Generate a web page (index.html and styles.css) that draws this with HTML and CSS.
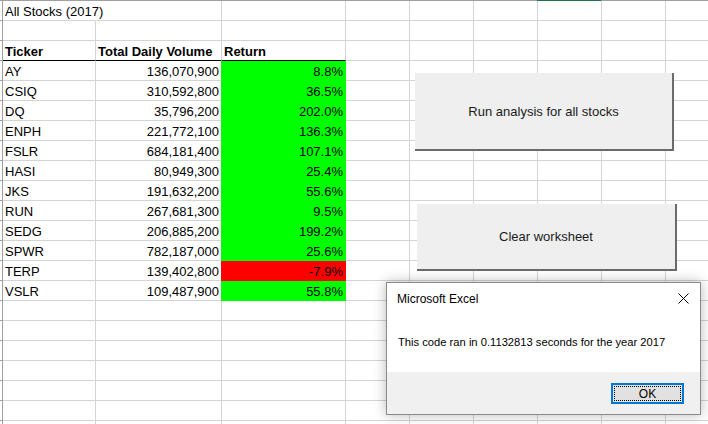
FILE: index.html
```html
<!DOCTYPE html>
<html>
<head>
<meta charset="utf-8">
<title>All Stocks (2017)</title>
<link rel="stylesheet" href="styles.css">
</head>
<body>
<div class="topbar"><span class="sel"></span></div>
<div class="sheet">
  <div class="row"><div class="rh"></div><div class="c spill">All Stocks (2017)</div><div class="c"></div><div class="c"></div><div class="c"></div><div class="c"></div><div class="c"></div><div class="c"></div><div class="c"></div><div class="c"></div></div>
  <div class="row"><div class="rh"></div><div class="c"></div><div class="c"></div><div class="c"></div><div class="c"></div><div class="c"></div><div class="c"></div><div class="c"></div><div class="c"></div><div class="c"></div></div>
  <div class="row head"><div class="rh"></div><div class="c">Ticker</div><div class="c">Total Daily Volume</div><div class="c">Return</div><div class="c"></div><div class="c"></div><div class="c"></div><div class="c"></div><div class="c"></div><div class="c"></div></div>
  <div class="row"><div class="rh"></div><div class="c">AY</div><div class="c num">136,070,900</div><div class="c num pos">8.8%</div><div class="c"></div><div class="c"></div><div class="c"></div><div class="c"></div><div class="c"></div><div class="c"></div></div>
  <div class="row"><div class="rh"></div><div class="c">CSIQ</div><div class="c num">310,592,800</div><div class="c num pos">36.5%</div><div class="c"></div><div class="c"></div><div class="c"></div><div class="c"></div><div class="c"></div><div class="c"></div></div>
  <div class="row"><div class="rh"></div><div class="c">DQ</div><div class="c num">35,796,200</div><div class="c num pos">202.0%</div><div class="c"></div><div class="c"></div><div class="c"></div><div class="c"></div><div class="c"></div><div class="c"></div></div>
  <div class="row"><div class="rh"></div><div class="c">ENPH</div><div class="c num">221,772,100</div><div class="c num pos">136.3%</div><div class="c"></div><div class="c"></div><div class="c"></div><div class="c"></div><div class="c"></div><div class="c"></div></div>
  <div class="row"><div class="rh"></div><div class="c">FSLR</div><div class="c num">684,181,400</div><div class="c num pos">107.1%</div><div class="c"></div><div class="c"></div><div class="c"></div><div class="c"></div><div class="c"></div><div class="c"></div></div>
  <div class="row"><div class="rh"></div><div class="c">HASI</div><div class="c num">80,949,300</div><div class="c num pos">25.4%</div><div class="c"></div><div class="c"></div><div class="c"></div><div class="c"></div><div class="c"></div><div class="c"></div></div>
  <div class="row"><div class="rh"></div><div class="c">JKS</div><div class="c num">191,632,200</div><div class="c num pos">55.6%</div><div class="c"></div><div class="c"></div><div class="c"></div><div class="c"></div><div class="c"></div><div class="c"></div></div>
  <div class="row"><div class="rh"></div><div class="c">RUN</div><div class="c num">267,681,300</div><div class="c num pos">9.5%</div><div class="c"></div><div class="c"></div><div class="c"></div><div class="c"></div><div class="c"></div><div class="c"></div></div>
  <div class="row"><div class="rh"></div><div class="c">SEDG</div><div class="c num">206,885,200</div><div class="c num pos">199.2%</div><div class="c"></div><div class="c"></div><div class="c"></div><div class="c"></div><div class="c"></div><div class="c"></div></div>
  <div class="row"><div class="rh"></div><div class="c">SPWR</div><div class="c num">782,187,000</div><div class="c num pos">25.6%</div><div class="c"></div><div class="c"></div><div class="c"></div><div class="c"></div><div class="c"></div><div class="c"></div></div>
  <div class="row"><div class="rh"></div><div class="c">TERP</div><div class="c num">139,402,800</div><div class="c num neg">-7.9%</div><div class="c"></div><div class="c"></div><div class="c"></div><div class="c"></div><div class="c"></div><div class="c"></div></div>
  <div class="row"><div class="rh"></div><div class="c">VSLR</div><div class="c num">109,487,900</div><div class="c num pos">55.8%</div><div class="c"></div><div class="c"></div><div class="c"></div><div class="c"></div><div class="c"></div><div class="c"></div></div>
  <div class="row"><div class="rh"></div><div class="c"></div><div class="c"></div><div class="c"></div><div class="c"></div><div class="c"></div><div class="c"></div><div class="c"></div><div class="c"></div><div class="c"></div></div>
  <div class="row"><div class="rh"></div><div class="c"></div><div class="c"></div><div class="c"></div><div class="c"></div><div class="c"></div><div class="c"></div><div class="c"></div><div class="c"></div><div class="c"></div></div>
  <div class="row"><div class="rh"></div><div class="c"></div><div class="c"></div><div class="c"></div><div class="c"></div><div class="c"></div><div class="c"></div><div class="c"></div><div class="c"></div><div class="c"></div></div>
  <div class="row"><div class="rh"></div><div class="c"></div><div class="c"></div><div class="c"></div><div class="c"></div><div class="c"></div><div class="c"></div><div class="c"></div><div class="c"></div><div class="c"></div></div>
  <div class="row"><div class="rh"></div><div class="c"></div><div class="c"></div><div class="c"></div><div class="c"></div><div class="c"></div><div class="c"></div><div class="c"></div><div class="c"></div><div class="c"></div></div>
  <div class="row"><div class="rh"></div><div class="c"></div><div class="c"></div><div class="c"></div><div class="c"></div><div class="c"></div><div class="c"></div><div class="c"></div><div class="c"></div><div class="c"></div></div>
  <div class="row"><div class="rh"></div><div class="c"></div><div class="c"></div><div class="c"></div><div class="c"></div><div class="c"></div><div class="c"></div><div class="c"></div><div class="c"></div><div class="c"></div></div>
</div>

<div class="xbtn btn-run">Run analysis for all stocks</div>
<div class="xbtn btn-clear">Clear worksheet</div>

<div class="dialog">
  <div class="dlg-title">
    <span>Microsoft Excel</span>
    <svg class="close" width="11" height="11" viewBox="0 0 11 11"><path d="M0.5 0.5 L10.5 10.5 M10.5 0.5 L0.5 10.5" stroke="#000" stroke-width="1" fill="none"/></svg>
  </div>
  <div class="dlg-body">This code ran in 0.1132813 seconds for the year 2017</div>
  <div class="dlg-foot"><div class="ok"><span>OK</span></div></div>
</div>
</body>
</html>
```

FILE: styles.css
```css
html, body {
  margin: 0;
  padding: 0;
  background: #fff;
}
body {
  width: 708px;
  height: 424px;
  overflow: hidden;
  position: relative;
  font-family: "Liberation Sans", Arial, sans-serif;
  color: #000;
}
.topbar {
  height: 1px;
  background: #a0a0a0;
  display: flex;
}
.topbar .sel {
  margin-left: 537px;
  width: 64px;
  height: 1px;
  background: #217346;
}
.sheet {
  display: flex;
  flex-direction: column;
}
.row {
  display: grid;
  grid-template-columns: 3px 93px 126px 124px repeat(6, 64px);
  height: 20px;
}
.rh {
  box-sizing: border-box;
  border-right: 1px solid #a0a0a0;
  border-bottom: 1px solid #a0a0a0;
}
.c {
  box-sizing: border-box;
  border-right: 1px solid #d4d4d4;
  border-bottom: 1px solid #d4d4d4;
  font-size: 13px;
  line-height: 15px;
  padding: 0 2px 1px 2px;
  display: flex;
  align-items: flex-end;
  white-space: nowrap;
  min-width: 0;
}
.c.spill {
  border-right-color: #fff;
  overflow: visible;
}
.head .c {
  font-weight: bold;
}
.head .c:nth-child(2),
.head .c:nth-child(3),
.head .c:nth-child(4) {
  border-bottom-color: #000;
}
.c.num {
  justify-content: flex-end;
}
.c.pos {
  background: #00ff00;
  border-color: #00ff00;
  box-shadow: -1px 0 0 #00ff00;
}
.c.neg {
  background: #ff0000;
  border-color: #ff0000;
  box-shadow: -1px 0 0 #ff0000;
}

.xbtn {
  position: absolute;
  box-sizing: border-box;
  background: #efefef;
  border-right: 2px solid #6b6b6b;
  border-bottom: 2px solid #6b6b6b;
  display: flex;
  align-items: center;
  justify-content: center;
  font-size: 13px;
  color: #1a1a1a;
}
.btn-run {
  left: 415px;
  top: 73px;
  width: 259px;
  height: 78px;
}
.btn-clear {
  left: 417px;
  top: 204px;
  width: 260px;
  height: 67px;
}

.dialog {
  position: absolute;
  left: 386px;
  top: 282px;
  width: 315px;
  height: 133px;
  box-sizing: border-box;
  border: 1px solid #8a8a8a;
  background: #fff;
  box-shadow: 0 0 12px rgba(0, 0, 0, 0.28);
  display: flex;
  flex-direction: column;
}
.dlg-title {
  height: 31px;
  display: flex;
  align-items: center;
  justify-content: space-between;
  padding: 0 11px 0 10px;
  font-size: 12px;
}
.close {
  display: block;
}
.dlg-body {
  flex: 1;
  padding: 22px 0 0 11px;
  font-size: 11.2px;
  white-space: nowrap;
}
.dlg-foot {
  height: 42px;
  background: #f0f0f0;
  display: flex;
  justify-content: flex-end;
  align-items: flex-start;
  padding: 11px 16px 0 0;
  box-sizing: border-box;
}
.ok {
  width: 73px;
  height: 21px;
  box-sizing: border-box;
  border: 2px solid #0078d7;
  background: #e1e1e1;
  padding: 1px;
  display: flex;
}
.ok span {
  flex: 1;
  border: 1px dotted #000;
  display: flex;
  align-items: center;
  justify-content: center;
  font-size: 12px;
}
```
